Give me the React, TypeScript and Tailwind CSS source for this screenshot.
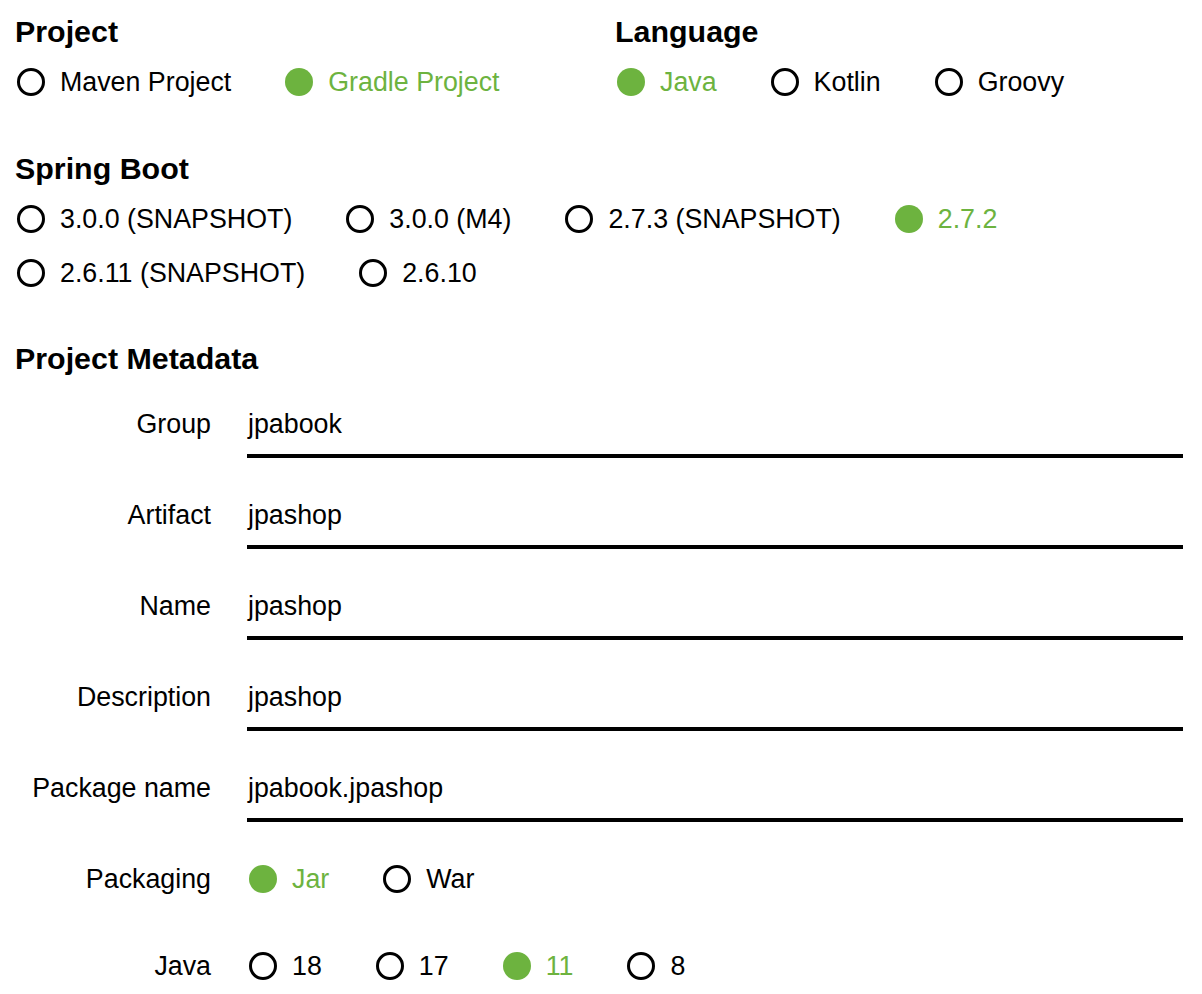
import React from "react";

type Opt = { label: string; checked?: boolean };

function Radio({ label, checked }: Opt) {
  return (
    <div className="flex items-center h-[36px] mr-[54px]">
      {checked ? (
        <span className="block w-[28px] h-[28px] rounded-full bg-[#6db33f]" />
      ) : (
        <span className="block w-[28px] h-[28px] rounded-full border-[3px] border-black box-border" />
      )}
      <span className={"ml-[15px] text-[26.8px] leading-[36px] " + (checked ? "text-[#6db33f]" : "text-black")}>{label}</span>
    </div>
  );
}

function Heading({ children }: { children: React.ReactNode }) {
  return <div className="text-[30.4px] leading-[36px] font-bold text-black">{children}</div>;
}

function Field({ label, value }: { label: string; value: string }) {
  return (
    <div className="flex mb-[39px]">
      <div className="w-[196px] text-right text-[26.8px] leading-[36px]">{label}</div>
      <div className="ml-[36px] w-[936px] border-b-[4px] border-black pb-[12px]">
        <div className="text-[26.8px] leading-[36px] pl-[1px]">{value}</div>
      </div>
    </div>
  );
}

function RadioField({ label, opts, className }: { label: string; opts: Opt[]; className?: string }) {
  return (
    <div className={"flex " + (className || "")}>
      <div className="w-[196px] text-right text-[26.8px] leading-[36px]">{label}</div>
      <div className="ml-[38px] flex">
        {opts.map((o) => (
          <Radio key={o.label} {...o} />
        ))}
      </div>
    </div>
  );
}

export default function App() {
  return (
    <div className="bg-white w-[1202px] h-[994px] overflow-hidden pl-[15px] pt-[13px] text-black" style={{ fontFamily: '"Liberation Sans", Arial, sans-serif' }}>
      <div className="flex">
        <div className="w-[600px]">
          <Heading>Project</Heading>
          <div className="flex mt-[15px] ml-[2px]">
            <Radio label="Maven Project" />
            <Radio label="Gradle Project" checked />
          </div>
        </div>
        <div>
          <Heading>Language</Heading>
          <div className="flex mt-[15px] ml-[2px]">
            <Radio label="Java" checked />
            <Radio label="Kotlin" />
            <Radio label="Groovy" />
          </div>
        </div>
      </div>

      <div className="mt-[50px]">
        <Heading>Spring Boot</Heading>
        <div className="flex mt-[15px] ml-[2px]">
          <Radio label="3.0.0 (SNAPSHOT)" />
          <Radio label="3.0.0 (M4)" />
          <Radio label="2.7.3 (SNAPSHOT)" />
          <Radio label="2.7.2" checked />
        </div>
        <div className="flex mt-[18px] ml-[2px]">
          <Radio label="2.6.11 (SNAPSHOT)" />
          <Radio label="2.6.10" />
        </div>
      </div>

      <div className="mt-[49px]">
        <Heading>Project Metadata</Heading>
        <div className="mt-[30px]">
          <Field label="Group" value="jpabook" />
          <Field label="Artifact" value="jpashop" />
          <Field label="Name" value="jpashop" />
          <Field label="Description" value="jpashop" />
          <Field label="Package name" value="jpabook.jpashop" />
          <RadioField label="Packaging" opts={[{ label: "Jar", checked: true }, { label: "War" }]} className="mt-[2px]" />
          <RadioField
            label="Java"
            opts={[{ label: "18" }, { label: "17" }, { label: "11", checked: true }, { label: "8" }]}
            className="mt-[51px]"
          />
        </div>
      </div>
    </div>
  );
}
